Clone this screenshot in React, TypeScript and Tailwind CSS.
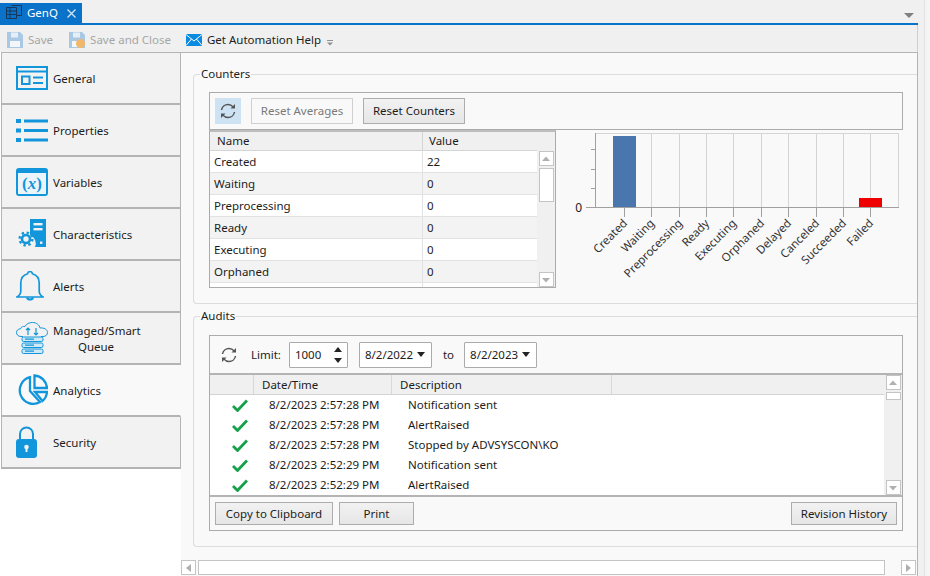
import type { ReactNode } from "react";

const blue = "#1296db";

function GeneralIcon() {
  return (
    <svg width="32" height="24" viewBox="0 0 32 24" fill="none" stroke={blue} strokeWidth="2">
      <rect x="1" y="1" width="30" height="22" />
      <path d="M1 5.500h30" />
      <rect x="6" y="10.500" width="7.500" height="7.500" />
      <path d="M17 11.500h10M17 17h10" />
    </svg>
  );
}

function PropertiesIcon() {
  return (
    <svg width="32" height="23" viewBox="0 0 32 23" fill={blue}>
      <rect x="0" y="0" width="5" height="4" />
      <rect x="8" y="0.500" width="24" height="3" />
      <rect x="0" y="9.500" width="5" height="4" />
      <rect x="8" y="10" width="24" height="3" />
      <rect x="0" y="19" width="5" height="4" />
      <rect x="8" y="19.500" width="24" height="3" />
    </svg>
  );
}

function VariablesIcon() {
  return (
    <svg width="32" height="28" viewBox="0 0 32 28">
      <rect x="0" y="0" width="32" height="28" rx="3" fill={blue} />
      <rect x="2" y="5" width="28" height="21" fill="#eaf5fb" />
      <text x="16" y="21" textAnchor="middle" fontFamily="Liberation Serif, serif" fontWeight="700" fontSize="17" fill={blue}>
        (<tspan fontStyle="italic">x</tspan>)
      </text>
    </svg>
  );
}

function CharacteristicsIcon() {
  return (
    <svg width="29" height="30" viewBox="0 0 29 30" fill={blue} className="ml-[2px]">
      <path d="M12 0h16v28H17a9 9 0 0 0-5-12z" />
      <rect x="15.500" y="4" width="9" height="2.400" fill="#f2f2f2" />
      <rect x="15.500" y="9" width="9" height="2.400" fill="#f2f2f2" />
      <rect x="22" y="22.500" width="2.400" height="2.400" fill="#f2f2f2" />
      <g fill="none" stroke={blue}>
        <circle cx="8" cy="20" r="4" strokeWidth="2.600" />
        <circle cx="8" cy="20" r="6.400" strokeWidth="2.400" strokeDasharray="2.400 2.600" />
      </g>
    </svg>
  );
}

function AlertsIcon() {
  return (
    <svg width="28" height="32" viewBox="0 0 28 32" fill="none" stroke={blue} strokeWidth="1.700">
      <path d="M14 1.500c-1.300 0-2.200.9-2.400 2.200C7 5 4.800 8.600 4.800 13v8c0 2.600-1.500 4.600-3.800 6h26c-2.300-1.400-3.800-3.400-3.800-6v-8c0-4.400-2.200-8-6.800-9.300C16.200 2.400 15.300 1.500 14 1.500z" />
      <path d="M11 27.500c.4 2.600 5.600 2.600 6 0" strokeWidth="2" />
    </svg>
  );
}

function QueueIcon() {
  return (
    <svg width="32" height="32" viewBox="0 0 32 32" fill="none" stroke={blue} strokeWidth="1">
      <path d="M7 14.500H5C2 14.500.5 12.500.5 10.500S2 7 4.500 6.800C5 5 7 4 9 4.500 10.500 1.500 13.500.5 16.500.5c4 0 7 2.500 7.500 5.500 4-.5 7.500 1.500 7.500 4.500 0 2.500-2 4-4.500 4h-2" />
      <path d="M12 6v7M10 8l2-2 2 2M20 6v7M18 11l2 2 2-2" strokeWidth="1.200" />
      <g fill="#cfe9f7">
        <rect x="6" y="15" width="21" height="4.500" rx="1.500" />
        <rect x="6" y="21" width="21" height="4.500" rx="1.500" />
        <rect x="6" y="27" width="21" height="4.500" rx="1.500" />
      </g>
      <path d="M9 17.200h9M9 23.200h9M9 29.200h9" strokeWidth="1.200" />
    </svg>
  );
}

function AnalyticsIcon() {
  return (
    <svg width="32" height="32" viewBox="0 0 32 32" fill="none" stroke={blue} strokeWidth="2.300">
      <path d="M14 3.200A13.500 13.500 0 1 0 24 28L14 17z" />
      <path d="M18.500 1.500A13.500 13.500 0 0 1 31 14H18.500z" />
      <path d="M19 18h12a13.500 13.500 0 0 1-4.500 9z" />
    </svg>
  );
}

function SecurityIcon() {
  return (
    <svg width="21" height="32" viewBox="0 0 21 32">
      <path d="M4 14V8a6.500 6.500 0 0 1 13 0v6" fill="none" stroke={blue} strokeWidth="2" />
      <rect x="0" y="13" width="21" height="19" rx="3" fill={blue} />
      <circle cx="10.500" cy="21" r="2.300" fill="#f2f2f2" />
      <rect x="9.500" y="21" width="2" height="5" fill="#f2f2f2" />
    </svg>
  );
}

const navItems: { label: ReactNode; icon: ReactNode; active?: boolean }[] = [
  { label: "General", icon: <GeneralIcon /> },
  { label: "Properties", icon: <PropertiesIcon /> },
  { label: "Variables", icon: <VariablesIcon /> },
  { label: "Characteristics", icon: <CharacteristicsIcon /> },
  { label: "Alerts", icon: <AlertsIcon /> },
  { label: <span className="block w-[86px] text-center leading-[16px]">Managed/Smart Queue</span>, icon: <QueueIcon /> },
  { label: "Analytics", icon: <AnalyticsIcon />, active: true },
  { label: "Security", icon: <SecurityIcon /> },
];

const counters = [
  ["Created", "22"],
  ["Waiting", "0"],
  ["Preprocessing", "0"],
  ["Ready", "0"],
  ["Executing", "0"],
  ["Orphaned", "0"],
];

const audits = [
  ["8/2/2023 2:57:28 PM", "Notification sent"],
  ["8/2/2023 2:57:28 PM", "AlertRaised"],
  ["8/2/2023 2:57:28 PM", "Stopped by ADVSYSCON\\KO"],
  ["8/2/2023 2:52:29 PM", "Notification sent"],
  ["8/2/2023 2:52:29 PM", "AlertRaised"],
];

const chartTicks = [
  ["Created", 624],
  ["Waiting", 651],
  ["Preprocessing", 679],
  ["Ready", 706],
  ["Executing", 733],
  ["Orphaned", 761],
  ["Delayed", 788],
  ["Canceled", 816],
  ["Succeeded", 843],
  ["Failed", 870],
] as const;

function RefreshIcon() {
  return (
    <svg width="16" height="16" viewBox="0 0 16 16" fill="none" stroke="#555" strokeWidth="1.500">
      <path d="M1.500 7C2 3.800 4.800 1.500 8 1.500c2 0 3.800.9 5 2.400" />
      <path d="M15 1v4.500h-4.500z" fill="#555" stroke="none" />
      <path d="M14.500 9c-.5 3.200-3.300 5.500-6.500 5.500-2 0-3.800-.9-5-2.400" />
      <path d="M1 15v-4.500h4.500z" fill="#555" stroke="none" />
    </svg>
  );
}

function ScrollButton({ dir }: { dir: "up" | "down" | "left" | "right" }) {
  const points = {
    up: "1,6 5,1.500 9,6",
    down: "1,2 5,6.500 9,2",
    left: "7,0 2,4 7,8",
    right: "2,0 7,4 2,8",
  }[dir];
  return (
    <div className="flex h-[15px] w-[15px] shrink-0 items-center justify-center border border-[#c4c4c4] bg-white">
      <svg width="10" height="8" viewBox="0 0 10 8">
        <polygon points={points} fill="#b0b0b0" />
      </svg>
    </div>
  );
}

function Dropdown({ value }: { value: string }) {
  return (
    <div className="flex h-[26px] w-[73px] items-center justify-between rounded-[1px] border border-[#ababab] bg-white pl-[5px] pr-[6px]">
      <span>{value}</span>
      <svg width="8" height="5" viewBox="0 0 8 5">
        <polygon points="0,0 8,0 4,5" fill="#222" />
      </svg>
    </div>
  );
}

function Button({ children, className }: { children: ReactNode; className: string }) {
  return (
    <button className={`flex h-[23px] items-center justify-center border border-[#adadad] bg-gradient-to-b from-[#f2f2f2] to-[#e6e6e6] ${className}`}>
      {children}
    </button>
  );
}

function Chart() {
  // chart coordinates are page pixels, shifted by the viewBox origin
  return (
    <svg width="340" height="172" viewBox="560 130 340 172" className="ml-[4px] shrink-0">
      <rect x="595.500" y="133.500" width="303" height="74" fill="none" stroke="#d4d4d4" />
      {chartTicks.slice(1).map(([name, x]) => (
        <line key={name} x1={x + 0.5} x2={x + 0.5} y1="133" y2="207" stroke="#d4d4d4" />
      ))}
      <rect x="613" y="136" width="23" height="71" fill="#4a76ae" />
      <rect x="859" y="198" width="23" height="9" fill="#ee0000" />
      <line x1="595.500" x2="595.500" y1="133" y2="207" stroke="#a0a0a0" />
      <line x1="586" x2="899" y1="207.500" y2="207.500" stroke="#a0a0a0" />
      {[149, 169, 188].map((y) => (
        <line key={y} x1="591" x2="595" y1={y + 0.5} y2={y + 0.5} stroke="#a0a0a0" />
      ))}
      <text x="582" y="212" textAnchor="end" fontSize="12" fill="#222">0</text>
      {chartTicks.map(([name, x]) => (
        <g key={name}>
          <line x1={x + 0.5} x2={x + 0.5} y1="207" y2="217" stroke="#a0a0a0" />
          <text
            x={x + 4}
            y={224}
            textAnchor="end"
            fontSize="11.5"
            fill="#333"
            transform={`rotate(-45 ${x + 4} 224)`}
          >
            {name}
          </text>
        </g>
      ))}
    </svg>
  );
}

export default function App() {
  return (
    <div className="flex h-[576px] w-[930px] overflow-hidden bg-[#f4f4f4] font-['Noto_Sans',sans-serif] text-[11.5px] text-[#1c1c1c]">
      <div className="flex w-[925px] shrink-0 flex-col border-r border-[#e2e2e2] bg-[#f0f0f0]">
        {/* tab strip */}
        <div className="flex h-[23px] shrink-0 items-end">
          <div className="flex h-[20px] w-[82px] items-center bg-[#0a72c8] pl-[6px] text-white">
            <svg width="16" height="16" viewBox="0 0 16 16" fill="none" stroke="#14385c" strokeWidth="1">
              <path d="M.5 2.500h10v11H.5zM.5 6h10M.5 9.500h10M4 2.500v11M5.500.5h10v10h-5" />
            </svg>
            <span className="ml-[5px]">GenQ</span>
            <svg width="9" height="9" viewBox="0 0 9 9" className="ml-[9px]" stroke="#d8e8f6" strokeWidth="1.200">
              <path d="M.5.5l8 8M8.500.5l-8 8" />
            </svg>
          </div>
          <div className="flex flex-1 justify-end pb-[4px] pr-[10px]">
            <svg width="10" height="6" viewBox="0 0 10 6">
              <polygon points="0,0 10,0 5,5" fill="#808080" />
            </svg>
          </div>
        </div>
        <div className="h-[2px] w-[918px] shrink-0 bg-[#0a72c8]" />

        {/* toolbar */}
        <div className="flex h-[27px] w-[918px] shrink-0 items-center border-r border-[#cfcfcf] pt-[2px]">
          <div className="flex items-center pl-[7px] text-[#a6a6a6]">
            <svg width="16" height="16" viewBox="0 0 16 16">
              <path d="M0 0h13l3 3v13H0z" fill="#a9c8e4" />
              <rect x="4" y="0.500" width="7" height="5" fill="#e6eef6" />
              <rect x="3" y="9" width="10" height="6" fill="#f4f7fa" />
            </svg>
            <span className="ml-[5px]">Save</span>
          </div>
          <div className="ml-[16px] flex items-center text-[#a6a6a6]">
            <svg width="16" height="16" viewBox="0 0 16 16">
              <path d="M0 0h13l3 3v13H0z" fill="#a9c8e4" />
              <rect x="4" y="0.500" width="7" height="5" fill="#e6eef6" />
              <rect x="3" y="9" width="10" height="6" fill="#f4f7fa" />
              <circle cx="11.500" cy="11.500" r="4.500" fill="#f3b76a" />
            </svg>
            <span className="ml-[5px]">Save and Close</span>
          </div>
          <div className="ml-[15px] flex items-center">
            <svg width="16" height="12" viewBox="0 0 16 12">
              <rect width="16" height="12" fill="#0a8ae0" />
              <path d="M0 .5l8 6.500L16 .5M0 11.500l5.500-6.500M16 11.500L10.500 5" fill="none" stroke="#fff" strokeWidth="1" />
            </svg>
            <span className="ml-[5px] text-[#222]">Get Automation Help</span>
            <svg width="7" height="6" viewBox="0 0 7 6" className="ml-[6px] mt-[6px]">
              <path d="M0 .5h6" stroke="#909090" />
              <polygon points="0,2.500 6,2.500 3,5.500" fill="#909090" />
            </svg>
          </div>
        </div>

        <div className="flex min-h-0 flex-1">
          {/* side navigation */}
          <div className="w-[181px] shrink-0 bg-white pl-[1px]">
            <div className="border-t border-[#b4b4b4]">
              {navItems.map((item, i) => (
                <div
                  key={i}
                  className={`flex h-[52px] items-center border-b-2 border-l border-r border-b-[#b4b4b4] border-l-[#b4b4b4] ${
                    item.active ? "border-r-transparent bg-[#f9f9f9]" : "border-r-[#b4b4b4] bg-[#f2f2f2]"
                  }`}
                >
                  <div className="flex w-[51px] shrink-0 pl-[14px]">{item.icon}</div>
                  <div className="mt-[2px]">{item.label}</div>
                </div>
              ))}
            </div>
          </div>

          {/* main panel */}
          <div className="flex w-[737px] min-w-0 flex-col border-r border-t border-[#b4b4b4] bg-[#f9f9f9]">
            <div className="min-h-0 flex-1 pl-[12px] pt-[13px]">
              <fieldset className="h-[238px] rounded-l-[4px] border border-r-0 border-[#dcdcdc] pl-[15px]">
                <legend className="ml-[-9px] px-[1px] leading-[16px]">Counters</legend>
                <div className="mt-[10px] w-[694px] border border-[#ababab]">
                  <div className="flex h-[36px] items-center pl-[5px]">
                    <div className="flex h-[26px] w-[26px] items-center justify-center bg-[#cde3f3]">
                      <RefreshIcon />
                    </div>
                    <div className="ml-[10px] flex h-[26px] w-[102px] items-center justify-center border border-[#d0d0d0] text-[#7a7a7a]">
                      Reset Averages
                    </div>
                    <div className="ml-[10px] flex h-[26px] w-[102px] items-center justify-center border border-[#adadad] bg-gradient-to-b from-[#f2f2f2] to-[#e6e6e6]">
                      Reset Counters
                    </div>
                  </div>
                </div>
                <div className="flex">
                  <div className="flex h-[158px] w-[347px] shrink-0 border border-t-2 border-[#ababab] border-t-[#bdbdbd] bg-white">
                    <div className="min-w-0 flex-1 overflow-hidden">
                      <div className="flex h-[19px] bg-[#f0f0f0]">
                        <div className="w-[213px] border-b border-r border-[#d4d4d4] pl-[7px] leading-[18px]">Name</div>
                        <div className="flex-1 border-b border-[#d4d4d4] pl-[6px] leading-[18px]">Value</div>
                      </div>
                      {[...counters, ["", ""]].map(([name, value], i) => (
                        <div key={i} className={`flex h-[22px] border-b border-[#e2e2e2] ${i % 2 ? "bg-[#f3f3f3]" : "bg-white"}`}>
                          <div className="w-[213px] border-r border-[#e2e2e2] pl-[4px] leading-[22px]">{name}</div>
                          <div className="pl-[4px] leading-[22px]">{value}</div>
                        </div>
                      ))}
                    </div>
                    <div className="flex w-[18px] shrink-0 flex-col items-center bg-[#f0f0f0] pt-[19px]">
                      <ScrollButton dir="up" />
                      <div className="mt-[2px] h-[34px] w-[15px] border border-[#c4c4c4] bg-white" />
                      <div className="flex-1" />
                      <ScrollButton dir="down" />
                    </div>
                  </div>
                  <Chart />
                </div>
              </fieldset>

              <fieldset className="mt-[4px] h-[239px] rounded-l-[4px] border border-r-0 border-[#dcdcdc] pl-[15px]">
                <legend className="ml-[-9px] px-[1px] leading-[16px]">Audits</legend>
                <div className="mt-[11px] flex h-[196px] w-[694px] flex-col border border-[#ababab]">
                  <div className="flex h-[37px] shrink-0 items-center pl-[11px]">
                    <RefreshIcon />
                    <span className="ml-[14px]">Limit:</span>
                    <div className="ml-[8px] flex h-[26px] w-[59px] items-center justify-between rounded-[1px] border border-[#ababab] bg-white pl-[5px] pr-[5px]">
                      <span>1000</span>
                      <svg width="8" height="16" viewBox="0 0 8 16">
                        <polygon points="0,5 8,5 4,0" fill="#222" />
                        <polygon points="0,11 8,11 4,16" fill="#222" />
                      </svg>
                    </div>
                    <div className="ml-[11px]"><Dropdown value="8/2/2022" /></div>
                    <span className="ml-[11px]">to</span>
                    <div className="ml-[10px]"><Dropdown value="8/2/2023" /></div>
                  </div>
                  <div className="flex h-[124px] shrink-0 border-y-2 border-[#b4b4b4] bg-white">
                    <div className="min-w-0 flex-1">
                      <div className="flex h-[20px] border-b border-[#d4d4d4] bg-[#f0f0f0] leading-[19px]">
                        <div className="w-[44px] border-r border-[#d8d8d8]" />
                        <div className="w-[138px] border-r border-[#d8d8d8] pl-[8px]">Date/Time</div>
                        <div className="w-[220px] border-r border-[#d8d8d8] pl-[8px]">Description</div>
                      </div>
                      {audits.map(([when, what], i) => (
                        <div key={i} className="flex h-[20px] items-center">
                          <div className="flex w-[59px] shrink-0 pl-[22px]">
                            <svg width="16" height="13" viewBox="0 0 16 13" fill="none" stroke="#16a04a" strokeWidth="2.800">
                              <path d="M1 7l4.500 4.500L15 1.500" />
                            </svg>
                          </div>
                          <div className="w-[139px] shrink-0">{when}</div>
                          <div>{what}</div>
                        </div>
                      ))}
                    </div>
                    <div className="flex w-[18px] shrink-0 flex-col items-center bg-[#f0f0f0]">
                      <ScrollButton dir="up" />
                      <div className="mt-[2px] h-[8px] w-[15px] border border-[#c4c4c4] bg-white" />
                      <div className="flex-1" />
                      <ScrollButton dir="down" />
                    </div>
                  </div>
                  <div className="flex flex-1 items-center justify-between px-[5px]">
                    <div className="flex gap-[6px]">
                      <Button className="w-[118px]">Copy to Clipboard</Button>
                      <Button className="w-[75px]">Print</Button>
                    </div>
                    <Button className="w-[106px]">Revision History</Button>
                  </div>
                </div>
              </fieldset>
            </div>

            {/* bottom scrollbar */}
            <div className="mb-[1px] flex h-[15px] shrink-0 items-center">
              <ScrollButton dir="left" />
              <div className="ml-[2px] h-[15px] w-[687px] border border-[#c4c4c4] bg-white" />
              <div className="flex-1" />
              <ScrollButton dir="right" />
              <div className="w-[1px]" />
            </div>
          </div>
        </div>
      </div>
    </div>
  );
}
